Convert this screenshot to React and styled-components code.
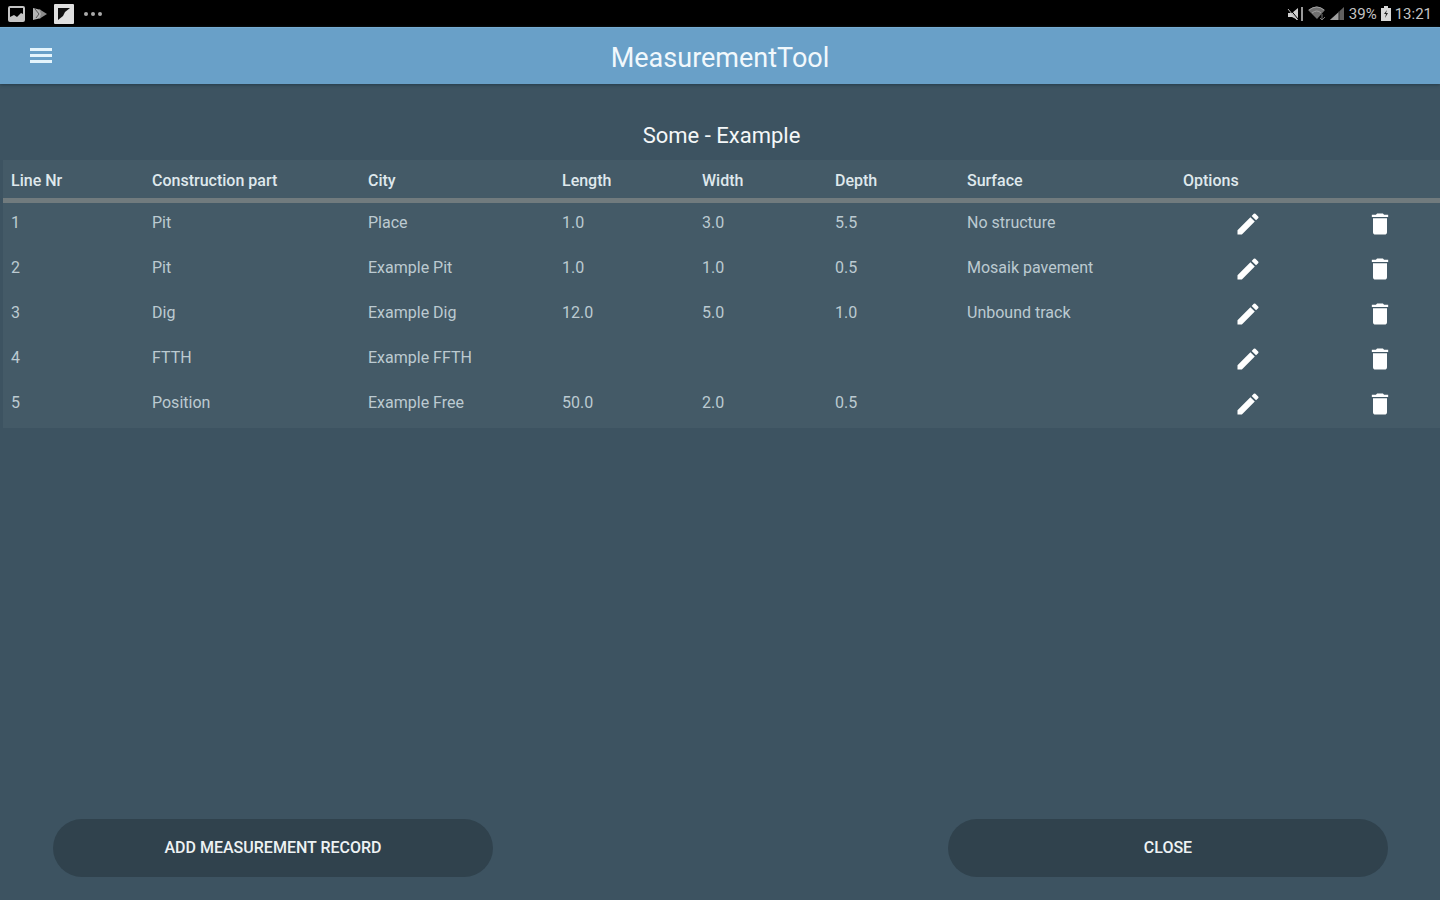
import React from "react";
import styled, { createGlobalStyle } from "styled-components";
import { MdDelete, MdEdit } from "react-icons/md";

const GlobalStyle = createGlobalStyle`
  * { box-sizing: border-box; }
  body {
    margin: 0;
    background: #3d5361;
    color: #fff;
    font-family: Roboto, "Liberation Sans", sans-serif;
  }
`;

const Screen = styled.div`
  min-height: 100vh;
  display: flex;
  flex-direction: column;
`;

const StatusBar = styled.div`
  height: 27px;
  padding: 0 8px;
  display: flex;
  align-items: center;
  justify-content: space-between;
  background: #000;
  color: #c4c4c4;
`;

const StatusGroup = styled.div`
  display: flex;
  align-items: center;
  gap: ${(p) => p.$gap}px;
  font-size: 15px;
  line-height: 28px;

  svg { display: block; }
`;

const AppBar = styled.header`
  height: 57px;
  padding: 0 30px;
  display: grid;
  grid-template-columns: 1fr auto 1fr;
  align-items: center;
  background: #69a0c8;
  border-top: 1px solid #76abd0;
  box-shadow: 0 1px 3px #243c4a;
`;

const IconButton = styled.button`
  display: inline-flex;
  align-items: center;
  justify-content: center;
  justify-self: start;
  padding: 0;
  border: 0;
  background: none;
  color: #fff;
  font-size: 28px;
  cursor: pointer;
`;

const AppTitle = styled.h1`
  margin: 0;
  padding-top: 4px;
  color: #f1f8fc;
  font-size: 27px;
  line-height: 32px;
  font-weight: 400;
`;

const Main = styled.main`
  flex: 1;
  padding: 36px 0 0 3px;
`;

const PageTitle = styled.h2`
  margin: 0 0 8px;
  text-align: center;
  color: #f4f7f8;
  font-size: 22px;
  line-height: 32px;
  font-weight: 400;
`;

const RecordTable = styled.table`
  width: 100%;
  table-layout: fixed;
  border-collapse: separate;
  border-spacing: 0;
  background: #445a67;
`;

const HeadCell = styled.th`
  height: 43px;
  padding: 4px 8px 0;
  border-bottom: 5px solid #717b7e;
  text-align: left;
  white-space: nowrap;
  color: #dfe8ec;
  font-size: 16px;
  line-height: 20px;
  font-weight: 500;
`;

const Cell = styled.td`
  height: 45px;
  padding: 0 8px 6px;
  white-space: nowrap;
  color: #bccad1;
  font-size: 16px;
  line-height: 20px;
`;

const ActionCell = styled.td`
  height: 45px;
  padding: 0 0 4px;
  text-align: center;
  vertical-align: middle;
  line-height: 0;
`;

const Footer = styled.footer`
  padding: 0 52px 23px 53px;
  display: flex;
  justify-content: space-between;
  gap: 32px;
`;

const PillButton = styled.button`
  flex: 0 1 440px;
  height: 58px;
  border: 0;
  border-radius: 29px;
  background: #30424d;
  color: #edf2f4;
  font-family: inherit;
  font-size: 16px;
  line-height: 20px;
  font-weight: 500;
  text-transform: uppercase;
  cursor: pointer;
`;

const columnWidths = [141, 216, 194, 140, 133, 132, 216, 145, 120];
const Column = styled.col`
  width: ${(p) => p.$width}px;
`;

const headings = ["Line Nr", "Construction part", "City", "Length", "Width", "Depth", "Surface"];

const records = [
  ["1", "Pit", "Place", "1.0", "3.0", "5.5", "No structure"],
  ["2", "Pit", "Example Pit", "1.0", "1.0", "0.5", "Mosaik pavement"],
  ["3", "Dig", "Example Dig", "12.0", "5.0", "1.0", "Unbound track"],
  ["4", "FTTH", "Example FFTH", "", "", "", ""],
  ["5", "Position", "Example Free", "50.0", "2.0", "0.5", ""],
];

const MenuIcon = () => (
  <svg width="22" height="16" viewBox="0 0 22 16" fill="#e4f4fc" aria-hidden="true">
    <rect y="0" width="22" height="3" />
    <rect y="6" width="22" height="3" />
    <rect y="12" width="22" height="3" />
  </svg>
);

const PictureIcon = () => (
  <svg width="18" height="16" viewBox="0 0 18 16" aria-hidden="true">
    <rect x="1" y="1" width="15" height="14" rx="1" fill="none" stroke="#c4c4c4" strokeWidth="2" />
    <path d="M2 14V11L6 9L9 11L13 7L15 8V14Z" fill="#c4c4c4" />
  </svg>
);

const PlayStoreIcon = () => (
  <svg width="14" height="14" viewBox="0 0 14 14" aria-hidden="true">
    <path d="M0 1L8 3V11L0 13Z" fill="#b4b4b4" />
    <path d="M6 2L14 7L6 12L8 7Z" fill="#8b8b8b" />
    <path d="M2 2L6 7L3 11" fill="none" stroke="#555" />
  </svg>
);

const FlipIcon = () => (
  <svg width="20" height="20" viewBox="0 0 20 20" aria-hidden="true">
    <rect width="20" height="20" rx="1" fill="#e0e0e0" />
    <path d="M4 4H16L11 8L9 12L4 16Z" fill="#111" />
  </svg>
);

const DotsIcon = () => (
  <svg width="22" height="6" viewBox="0 0 22 6" fill="#aaa" aria-hidden="true">
    <circle cx="5" cy="3" r="2" />
    <circle cx="12" cy="3" r="2" />
    <circle cx="19" cy="3" r="2" />
  </svg>
);

const MuteIcon = () => (
  <svg width="17" height="16" viewBox="0 0 17 16" aria-hidden="true">
    <path d="M1 7H5L11 2V14L5 11H1Z" fill="#d0d0d0" />
    <path d="M2 2L11 13" stroke="#000" />
    <path d="M1 3L10 14" stroke="#bbb" />
    <path d="M15 1V15" stroke="#999" strokeWidth="2" />
  </svg>
);

const WifiIcon = () => (
  <svg width="18" height="15" viewBox="0 0 18 15" aria-hidden="true">
    <path d="M0 4Q9 -3 17 4L9 13Z" fill="#707070" />
    <path d="M1 4Q9 -2 16 4M4 7Q9 3 13 7" fill="none" stroke="#a0a0a0" />
    <path d="M14 8V14M12 12L14 14L17 11" fill="none" stroke="#777" />
  </svg>
);

const SignalIcon = () => (
  <svg width="15" height="15" viewBox="0 0 15 15" aria-hidden="true">
    <path d="M0 14L14 1V14Z" fill="#606060" />
    <path d="M0 14L9 6V14Z" fill="#a0a0a0" />
    <path d="M9 5V14" stroke="#222" />
  </svg>
);

const BatteryIcon = () => (
  <svg width="10" height="15" viewBox="0 0 10 15" aria-hidden="true">
    <path d="M3 0H7V2H10V15H0V2H3Z" fill="#d8d8d8" />
    <path d="M6 4L3 8H5L4 12L7 7H5Z" fill="#222" />
  </svg>
);

export default function App() {
  return (
    <>
      <GlobalStyle />
      <Screen>
        <StatusBar>
          <StatusGroup $gap={7}>
            <PictureIcon />
            <PlayStoreIcon />
            <FlipIcon />
            <DotsIcon />
          </StatusGroup>
          <StatusGroup $gap={4}>
            <MuteIcon />
            <WifiIcon />
            <SignalIcon />
            <span>39%</span>
            <BatteryIcon />
            <span>13:21</span>
          </StatusGroup>
        </StatusBar>
        <AppBar>
          <IconButton type="button" aria-label="Menu">
            <MenuIcon />
          </IconButton>
          <AppTitle>MeasurementTool</AppTitle>
        </AppBar>
        <Main>
          <PageTitle>Some - Example</PageTitle>
          <RecordTable>
            <colgroup>
              {columnWidths.map((width, i) => (
                <Column key={i} $width={width} />
              ))}
            </colgroup>
            <thead>
              <tr>
                {headings.map((heading) => (
                  <HeadCell key={heading} scope="col">{heading}</HeadCell>
                ))}
                <HeadCell scope="col" colSpan={2}>Options</HeadCell>
              </tr>
            </thead>
            <tbody>
              {records.map((record) => (
                <tr key={record[0]}>
                  {record.map((value, i) => (
                    <Cell key={i}>{value}</Cell>
                  ))}
                  <ActionCell>
                    <IconButton type="button" aria-label={`Edit line ${record[0]}`}>
                      <MdEdit />
                    </IconButton>
                  </ActionCell>
                  <ActionCell>
                    <IconButton type="button" aria-label={`Delete line ${record[0]}`}>
                      <MdDelete />
                    </IconButton>
                  </ActionCell>
                </tr>
              ))}
            </tbody>
          </RecordTable>
        </Main>
        <Footer>
          <PillButton type="button">Add measurement record</PillButton>
          <PillButton type="button">Close</PillButton>
        </Footer>
      </Screen>
    </>
  );
}
